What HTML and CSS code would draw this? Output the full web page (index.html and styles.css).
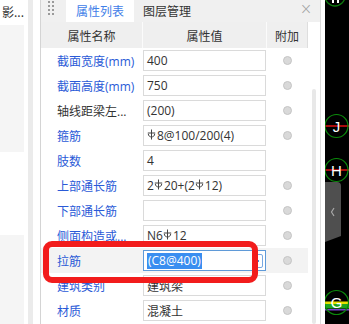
FILE: index.html
```html
<!DOCTYPE html>
<html lang="zh">
<head>
<meta charset="utf-8">
<title>属性列表</title>
<link rel="stylesheet" href="styles.css">
</head>
<body>
<div class="app">
  <aside class="left">
    <div class="left-main">
      <div class="left-title">影...</div>
      <div class="left-block b1"></div>
      <div class="left-space"></div>
      <div class="left-block b2"></div>
    </div>
    <div class="left-gap"></div>
    <div class="left-rail"></div>
    <div class="left-edge"></div>
  </aside>

  <section class="panel">
    <div class="tabs">
      <div class="handle"><i></i><i></i><i></i><i></i><i></i><i></i><i></i><i></i></div>
      <div class="tab active">属性列表</div>
      <div class="tab">图层管理</div>
      <div class="close">×</div>
    </div>
    <div class="body">
      <div class="grid">
        <div class="hrow">
          <div class="hc c-name">属性名称</div>
          <div class="hc c-val">属性值</div>
          <div class="hc c-add">附加</div>
        </div>

        <div class="row">
          <div class="c-name">截面宽度(mm)</div>
          <div class="c-val"><div class="inp">400</div></div>
          <div class="c-add"><span class="radio"></span></div>
        </div>
        <div class="row">
          <div class="c-name">截面高度(mm)</div>
          <div class="c-val"><div class="inp">750</div></div>
          <div class="c-add"><span class="radio"></span></div>
        </div>
        <div class="row">
          <div class="c-name plain">轴线距梁左...</div>
          <div class="c-val"><div class="inp">(200)</div></div>
          <div class="c-add"><span class="radio"></span></div>
        </div>
        <div class="row">
          <div class="c-name">箍筋</div>
          <div class="c-val"><div class="inp"><svg class="rb" viewBox="0 0 9 11"><path d="M4.5 0.5V10.5M0.8 4H8.2M1.3 4.8C1.3 9 7.7 9 7.7 4.8"/></svg>8@100/200(4)</div></div>
          <div class="c-add"><span class="radio"></span></div>
        </div>
        <div class="row">
          <div class="c-name">肢数</div>
          <div class="c-val"><div class="inp">4</div></div>
          <div class="c-add"></div>
        </div>
        <div class="row">
          <div class="c-name">上部通长筋</div>
          <div class="c-val"><div class="inp">2<svg class="rb" viewBox="0 0 9 11"><path d="M4.5 0.5V10.5M0.8 4H8.2M1.3 4.8C1.3 9 7.7 9 7.7 4.8"/></svg>20+(2<svg class="rb" viewBox="0 0 9 11"><path d="M4.5 0.5V10.5M0.8 4H8.2M1.3 4.8C1.3 9 7.7 9 7.7 4.8"/></svg>12)</div></div>
          <div class="c-add"><span class="radio"></span></div>
        </div>
        <div class="row">
          <div class="c-name">下部通长筋</div>
          <div class="c-val"><div class="inp"></div></div>
          <div class="c-add"><span class="radio"></span></div>
        </div>
        <div class="row">
          <div class="c-name">侧面构造或...</div>
          <div class="c-val"><div class="inp">N6<svg class="rb" viewBox="0 0 9 11"><path d="M4.5 0.5V10.5M0.8 4H8.2M1.3 4.8C1.3 9 7.7 9 7.7 4.8"/></svg>12</div></div>
          <div class="c-add"><span class="radio"></span></div>
        </div>
        <div class="row selected">
          <div class="c-name">拉筋</div>
          <div class="c-val"><div class="inp focus"><span class="sel">(C8@400)</span><span class="more"><i></i></span></div></div>
          <div class="c-add"><span class="radio"></span></div>
        </div>
        <div class="row">
          <div class="c-name">建筑类别</div>
          <div class="c-val"><div class="inp">建筑梁</div></div>
          <div class="c-add"><span class="radio"></span></div>
        </div>
        <div class="row">
          <div class="c-name">材质</div>
          <div class="c-val"><div class="inp">混凝土</div></div>
          <div class="c-add"><span class="radio"></span></div>
        </div>
      </div>
      <div class="scrollarea"><div class="thumb"></div></div>
    </div>
    <div class="redbox"></div>
  </section>

  <div class="sep"></div>

  <div class="canvas">
    <svg width="24" height="324" viewBox="0 0 24 324">
      <rect width="24" height="324" fill="#000"/>
      <circle cx="10" cy="-4" r="10" fill="none" stroke="#0e7a0e" stroke-width="1.3"/>
      <rect x="7" y="0" width="2" height="3" fill="#fff"/>
      <rect x="12" y="0" width="2" height="3" fill="#fff"/>

      <line x1="0" y1="126" x2="24" y2="126" stroke="#e01010" stroke-width="1.5"/>
      <circle cx="11.5" cy="126" r="11.5" fill="none" stroke="#0b8a0b" stroke-width="1.2"/>
      <text x="11.5" y="131.5" fill="#fff" font-family="Liberation Sans, sans-serif" font-size="15" text-anchor="middle">J</text>

      <line x1="0" y1="170" x2="24" y2="170" stroke="#e01010" stroke-width="1.5"/>
      <circle cx="11.5" cy="170" r="11.5" fill="none" stroke="#0b8a0b" stroke-width="1.2"/>
      <text x="11.5" y="175.5" fill="#fff" font-family="Liberation Sans, sans-serif" font-size="15" text-anchor="middle">H</text>

      <path d="M0 182H12Q16 182 16 186V236L0 242Z" fill="#4f4f4f"/>
      <path d="M9 208L6.5 212L9 216" fill="none" stroke="#a8a8a8" stroke-width="1.2"/>

      <rect x="0" y="301.5" width="24" height="2.5" fill="#e8e000"/>
      <rect x="0" y="304" width="24" height="4.5" fill="#1fa51f"/>
      <rect x="0" y="309" width="24" height="1.5" fill="#7a3fd0"/>
      <circle cx="11.5" cy="302.5" r="12" fill="none" stroke="#0b8a0b" stroke-width="1.2"/>
      <text x="11.5" y="308" fill="#fff" font-family="Liberation Sans, sans-serif" font-size="15" text-anchor="middle">G</text>
    </svg>
  </div>
</div>
</body>
</html>
```

FILE: styles.css
```css
* { box-sizing: border-box; }
html, body { margin: 0; padding: 0; }
body {
  width: 349px;
  height: 324px;
  overflow: hidden;
  background: #fff;
  color: #333;
  font-family: "Open Sans", "Noto Sans CJK SC", sans-serif;
  font-size: 12px;
}
.app { display: flex; height: 324px; }

/* left strip */
.left { display: flex; width: 40px; flex: none; }
.left-main { width: 24px; display: flex; flex-direction: column; }
.left-title {
  height: 25px;
  width: 28px;
  line-height: 24px;
  padding-left: 2px;
  white-space: nowrap;
  font-family: "Noto Sans CJK SC", sans-serif;
}
.left-block { background: #f5f5f5; }
.left-block.b1 { height: 127px; }
.left-space { height: 83px; }
.left-block.b2 { flex: 1; }
.left-gap { width: 4px; }
.left-rail { width: 5px; background: #ebebeb; }
.left-edge { width: 7px; }

/* panel */
.panel {
  position: relative;
  width: 281px;
  flex: none;
  border-left: 1px solid #d4d4d4;
  border-right: 1px solid #dcdcdc;
  display: flex;
  flex-direction: column;
}
.tabs {
  height: 22px;
  display: flex;
  align-items: stretch;
  background: #f0f0f0;
  font-family: "Noto Sans CJK SC", sans-serif;
}
.handle {
  width: 25px;
  padding: 1px 0 0 7px;
  display: grid;
  grid-template-columns: 2px 2px;
  grid-auto-rows: 2px;
  column-gap: 2px;
  row-gap: 2px;
  align-content: start;
}
.handle i { display: block; width: 2px; height: 2px; background: #9a9a9a; }
.tab { display: flex; align-items: center; line-height: 22px; }
.tab.active { background: #fff; color: #3f80e8; padding: 0 10px; }
.tab + .tab { padding-left: 9px; color: #333; }
.close {
  margin-left: auto;
  width: 28px;
  text-align: center;
  color: #a0a0a0;
  font-size: 15px;
  line-height: 18px;
  font-family: "DejaVu Sans", sans-serif;
  font-weight: 300;
}

.body { flex: 1; display: flex; }
.grid { width: 267px; }
.hrow {
  display: flex;
  height: 26px;
  background: #efefef;
  font-family: "Noto Sans CJK SC", sans-serif;
}
.hc {
  display: flex;
  align-items: center;
  justify-content: center;
  border-right: 1px solid #fbfbfb;
  color: #333;
}
.hc.c-add { border-right: 1px solid #dedede; }
.c-name { width: 102px; flex: none; }
.c-val { width: 124px; flex: none; }
.c-add { width: 41px; flex: none; }

.row { display: flex; height: 25px; }
.row.selected { background: #f3f3f3; }
.row .c-name {
  padding-left: 16px;
  display: flex;
  align-items: center;
  color: #2a5ad7;
  white-space: nowrap;
  overflow: hidden;
}
.row .c-name.plain { color: #333; }
.row .c-val { padding: 2px 1px 2px 0; }
.inp {
  height: 21px;
  border: 1px solid #dadada;
  background: #fff;
  padding-left: 3px;
  display: flex;
  align-items: center;
  white-space: nowrap;
  color: #333;
}
.inp.focus { border-color: #5f9ad8; padding-right: 2px; }
.sel { background: #3a8ef0; color: #fff; line-height: 16px; padding: 0 1px; }
.more {
  margin-left: auto;
  width: 10px;
  height: 14px;
  border: 1px solid #78a8e2;
  border-radius: 2px;
  display: flex;
  align-items: center;
  justify-content: center;
}
.more i { display: block; width: 2px; height: 2px; background: #4a86d8; }
.rb {
  width: 9px;
  height: 11px;
  fill: none;
  stroke: #444;
  stroke-width: 1;
  margin: 0 1px 2px 0;
}
.row .c-add { display: flex; align-items: center; justify-content: center; }
.radio {
  width: 9px;
  height: 9px;
  border-radius: 50%;
  background: #d9d9d9;
  border: 1px solid #c5c5c5;
}

.scrollarea { flex: 1; padding: 67px 0 0 4px; }
.thumb { width: 4px; height: 100%; background: #e8e8e8; border-radius: 2px; }

.redbox {
  position: absolute;
  left: 2px;
  top: 241px;
  width: 215px;
  height: 42px;
  border: 6px solid #f21c1c;
  border-radius: 9px;
}

.sep { width: 4px; flex: none; }
.canvas { width: 24px; flex: none; background: #000; }
.canvas svg { display: block; }
```
